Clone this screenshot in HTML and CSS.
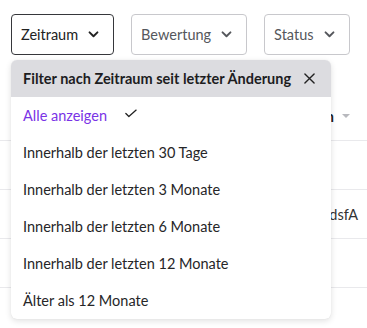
FILE: index.html
```html
<!DOCTYPE html>
<html lang="de">
<head>
<meta charset="utf-8">
<link rel="stylesheet" href="styles.css">
</head>
<body>
<div class="toolbar">
  <button class="filter filter-active">Zeitraum <svg class="chev" viewBox="0 0 12 8" width="11" height="7"><path d="M1.5 1.5 6 6l4.5-4.5" fill="none" stroke="currentColor" stroke-width="2.2" stroke-linecap="round" stroke-linejoin="round"/></svg></button>
  <button class="filter">Bewertung <svg class="chev" viewBox="0 0 12 8" width="11" height="7"><path d="M1.5 1.5 6 6l4.5-4.5" fill="none" stroke="currentColor" stroke-width="2.2" stroke-linecap="round" stroke-linejoin="round"/></svg></button>
  <button class="filter">Status <svg class="chev" viewBox="0 0 12 8" width="11" height="7"><path d="M1.5 1.5 6 6l4.5-4.5" fill="none" stroke="currentColor" stroke-width="2.2" stroke-linecap="round" stroke-linejoin="round"/></svg></button>
</div>
<div class="table">
  <div class="row head"><span class="head-cell">Aktion</span><span class="sort"></span></div>
  <div class="row"><span class="cell"></span></div>
  <div class="row"><span class="cell">asdsfA</span></div>
  <div class="row"><span class="cell"></span></div>
</div>
<div class="menu">
  <div class="menu-head"><span>Filter nach Zeitraum seit letzter Änderung</span>
    <svg class="close" viewBox="0 0 12 12" width="11" height="11"><path d="M1 1l10 10M11 1 1 11" stroke="currentColor" stroke-width="1.5" stroke-linecap="round"/></svg></div>
  <div class="item selected">Alle anzeigen <svg class="check" viewBox="0 0 14 10" width="12" height="9"><path d="M1 5l3.5 3.5L13 1" fill="none" stroke="currentColor" stroke-width="1.5" stroke-linecap="round" stroke-linejoin="round"/></svg></div>
  <div class="item">Innerhalb der letzten 30 Tage</div>
  <div class="item">Innerhalb der letzten 3 Monate</div>
  <div class="item">Innerhalb der letzten 6 Monate</div>
  <div class="item">Innerhalb der letzten 12 Monate</div>
  <div class="item">Älter als 12 Monate</div>
</div>
</body>
</html>
```
FILE: styles.css
```css
* { box-sizing: border-box; }
body {
  margin: 0;
  background: #fff;
  font-family: "Lato", "Noto Sans", sans-serif;
  font-size: 14.5px;
  color: #222;
  position: relative;
  width: 367px;
  height: 328px;
  overflow: hidden;
}
.toolbar {
  display: flex;
  gap: 17px;
  padding: 14px 11px 0;
}
.filter {
  display: flex;
  align-items: center;
  gap: 10px;
  height: 41px;
  padding: 0 14px 0 9px;
  border: 1px solid #c8c8cc;
  border-radius: 4px;
  background: #fff;
  font: inherit;
  color: #55575c;
}
.filter-active {
  border-color: #36373b;
  color: #222;
}
.chev { flex: none; }
.table {
  margin-top: 37px;
}
.row {
  display: flex;
  align-items: center;
  justify-content: flex-end;
  height: 49px;
  border-bottom: 1px solid #e9e9ec;
  padding-right: 9px;
  color: #333;
}
.row.head { padding-right: 17px; gap: 8px; color: #222; font-weight: 700; }
.cell { text-align: right; }
.sort {
  width: 0; height: 0;
  border-left: 4px solid transparent;
  border-right: 4px solid transparent;
  border-top: 4px solid #b8b9be;
}
.menu {
  position: absolute;
  left: 11px;
  top: 60px;
  width: 320px;
  background: #fff;
  border-radius: 6px;
  box-shadow: 0 2px 6px rgba(0,0,0,0.12), 0 0 1px rgba(0,0,0,0.1);
  overflow: hidden;
}
.menu-head {
  display: flex;
  align-items: center;
  justify-content: space-between;
  height: 37px;
  padding: 0 16px 0 12px;
  background: #dcdce0;
  font-weight: 700;
  color: #1d1d1f;
}
.close { color: #222; }
.item {
  display: flex;
  align-items: center;
  gap: 18px;
  height: 37px;
  padding-left: 12px;
  color: #262628;
}
.item.selected { color: #7a33e6; }
.check { color: #222; margin-top: -4px; }
```
